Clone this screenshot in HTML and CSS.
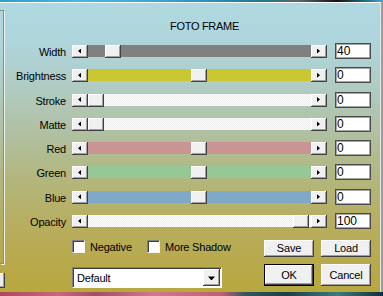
FILE: index.html
```html
<!DOCTYPE html>
<html>
<head>
<meta charset="utf-8">
<link rel="stylesheet" href="styles.css">
</head>
<body>
<div class="photo photo-top"></div>
<div class="dialog">
  <div class="side">
    <div class="group"></div>
    <div class="side-btn"></div>
  </div>
  <div class="main">
    <div class="title">FOTO FRAME</div>
    <div class="rows">
      <div class="label">Width</div>
      <div class="scroll"><div class="arrow"><i class="tri-left"></i></div><div class="track gray"><div class="thumb" style="margin-left:17px"></div></div><div class="arrow"><i class="tri-right"></i></div></div>
      <div class="edit">40</div>

      <div class="label">Brightness</div>
      <div class="scroll"><div class="arrow"><i class="tri-left"></i></div><div class="track yellow"><div class="thumb" style="margin-left:103px"></div></div><div class="arrow"><i class="tri-right"></i></div></div>
      <div class="edit">0</div>

      <div class="label">Stroke</div>
      <div class="scroll"><div class="arrow"><i class="tri-left"></i></div><div class="track dither"><div class="thumb" style="margin-left:0px"></div></div><div class="arrow"><i class="tri-right"></i></div></div>
      <div class="edit">0</div>

      <div class="label">Matte</div>
      <div class="scroll"><div class="arrow"><i class="tri-left"></i></div><div class="track dither"><div class="thumb" style="margin-left:0px"></div></div><div class="arrow"><i class="tri-right"></i></div></div>
      <div class="edit">0</div>

      <div class="label">Red</div>
      <div class="scroll"><div class="arrow"><i class="tri-left"></i></div><div class="track red"><div class="thumb" style="margin-left:103px"></div></div><div class="arrow"><i class="tri-right"></i></div></div>
      <div class="edit">0</div>

      <div class="label">Green</div>
      <div class="scroll"><div class="arrow"><i class="tri-left"></i></div><div class="track green"><div class="thumb" style="margin-left:103px"></div></div><div class="arrow"><i class="tri-right"></i></div></div>
      <div class="edit">0</div>

      <div class="label">Blue</div>
      <div class="scroll"><div class="arrow"><i class="tri-left"></i></div><div class="track blue"><div class="thumb" style="margin-left:103px"></div></div><div class="arrow"><i class="tri-right"></i></div></div>
      <div class="edit">0</div>

      <div class="label">Opacity</div>
      <div class="scroll"><div class="arrow"><i class="tri-left"></i></div><div class="track dither"><div class="thumb" style="margin-left:205px"></div></div><div class="arrow"><i class="tri-right"></i></div></div>
      <div class="edit">100</div>
    </div>
    <div class="bottom">
      <div class="opts">
        <div class="checks">
          <div class="check first"><span class="box"></span><span>Negative</span></div>
          <div class="check"><span class="box"></span><span>More Shadow</span></div>
        </div>
        <div class="combo"><span class="combo-text">Default</span><span class="drop"><i class="tri-down"></i></span></div>
      </div>
      <div class="buttons">
        <button class="btn">Save</button>
        <button class="btn">Load</button>
        <button class="btn default">OK</button>
        <button class="btn">Cancel</button>
      </div>
    </div>
  </div>
</div>
<div class="photo photo-bottom"></div>
</body>
</html>
```

FILE: styles.css
```css
* { box-sizing: border-box; }
html, body { margin: 0; padding: 0; }
body {
  width: 383px;
  height: 296px;
  overflow: hidden;
  background: #9c9c9c;
  font-family: "Liberation Sans", Arial, sans-serif;
  font-size: 11px;
  color: #000;
  letter-spacing: -0.2px;
}
.photo { width: 383px; }
.photo-top {
  height: 2px;
  background: linear-gradient(90deg, #2aa0c8 0%, #48b8e0 20%, #3ca8d0 40%, #2a90b8 55%, #207890 68%, #586870 78%, #101418 88%, #2a7090 96%, #4aa8c8 100%);
}
.photo-bottom {
  height: 4px;
  background: linear-gradient(90deg, #b04858 0%, #c86878 15%, #a05060 25%, #d07888 40%, #c06070 58%, #305860 64%, #184048 75%, #407880 88%, #103038 100%);
}
.dialog {
  width: 381px;
  height: 290px;
  border-top: 1px solid #ffffff;
  border-right: 1px solid #e6e6e6;
  display: flex;
  background: linear-gradient(to bottom, #b0d8e0 0%, #aed6dc 12%, #afd0d0 22%, #b0c8b8 34%, #b0c0a2 45%, #b3b67c 61%, #b7ad5c 78%, #b8a842 96%, #b8a840 100%);
}
.side {
  width: 6px;
  flex: none;
  display: flex;
  flex-direction: column;
}
.group {
  margin-top: 7px;
  width: 4px;
  height: 254px;
  border: 1px solid #8a8a8a;
  border-left: none;
  box-shadow: 1px 1px 0 #f0f0f0;
}
.side-btn {
  margin-top: 9px;
  width: 5px;
  height: 15px;
  background: #ececec;
  box-shadow: inset -1px -1px 0 #404040, inset -2px -2px 0 #a0a0a0, inset 0 1px 0 #fff;
}
.main {
  flex: 1;
  display: flex;
  flex-direction: column;
}
.title {
  margin-top: 16px;
  height: 14px;
  line-height: 14px;
  text-align: center;
  padding-left: 23px;
  letter-spacing: -0.3px;
}
.rows {
  margin-top: 10px;
  display: grid;
  grid-template-columns: 60px 255px 38px;
  grid-auto-rows: 24.3px;
  column-gap: 6px;
}
.label {
  text-align: right;
  margin-top: 2px;
  line-height: 14px;
  white-space: nowrap;
}
.scroll {
  margin-top: 2px;
  height: 12px;
  display: flex;
  align-items: flex-start;
}
.arrow {
  width: 16px;
  height: 13px;
  flex: none;
  background: #f0f0f0;
  box-shadow: inset -1px -1px 0 #404040, inset 1px 1px 0 #ffffff, inset -2px -2px 0 #a0a0a0;
  display: flex;
  align-items: center;
  justify-content: center;
}
.tri-left, .tri-right {
  display: block;
  width: 3px;
  height: 5px;
  background: #000;
  margin-top: -1px;
}
.tri-left { clip-path: polygon(100% 0, 0 50%, 100% 100%); margin-left: -1px; }
.tri-right { clip-path: polygon(0 0, 100% 50%, 0 100%); margin-left: -1px; }
.track {
  flex: 1;
  height: 12px;
  display: flex;
}
.track.gray { background: #808080; }
.track.yellow { background: #cac832; }
.track.red { background: #c89494; }
.track.green { background: #96c896; }
.track.blue { background: #80a8c8; }
.track.dither {
  background: repeating-conic-gradient(#ffffff 0 25%, #ebebeb 0 50%) 0 0 / 2px 2px;
}
.thumb {
  width: 16px;
  height: 13px;
  flex: none;
  background: #f0f0f0;
  box-shadow: inset -1px -1px 0 #404040, inset 1px 1px 0 #ffffff, inset -2px -2px 0 #a0a0a0;
}
.edit {
  margin-left: 2px;
  width: 36px;
  height: 16px;
  background: #fff;
  border: 1px solid #4a4a4a;
  box-shadow: inset 0 0 0 1px #a6a6a6;
  padding-left: 1px;
  font-size: 12px;
  line-height: 14px;
  letter-spacing: 0;
}
.bottom {
  margin-top: 2.6px;
  display: flex;
  align-items: flex-start;
}
.opts {
  margin-left: 66px;
  width: 150px;
  flex: none;
  display: flex;
  flex-direction: column;
}
.checks {
  display: flex;
  height: 13px;
}
.check {
  flex: none;
  display: flex;
  align-items: center;
  gap: 5px;
  line-height: 13px;
  white-space: nowrap;
}
.check span:last-child { margin-top: 2px; }
.check.first { width: 75px; }
.box {
  width: 13px;
  height: 13px;
  flex: none;
  background: #fff;
  border: 1px solid;
  border-color: #808080 #f4f4f4 #f4f4f4 #808080;
  box-shadow: inset 1px 1px 0 #404040;
}
.combo {
  margin-top: 14px;
  width: 150px;
  height: 21px;
  background: #fff;
  border: 1px solid;
  border-color: #808080 #ffffff #ffffff #808080;
  box-shadow: inset 1px 1px 0 #404040;
  display: flex;
  align-items: center;
  padding-left: 4px;
}
.combo-text { margin-top: 1px; }
.drop {
  margin-left: auto;
  margin-right: 1px;
  width: 17px;
  height: 17px;
  margin-top: 1px;
  background: #f0f0f0;
  box-shadow: inset -1px -1px 0 #404040, inset 1px 1px 0 #ffffff, inset -2px -2px 0 #a0a0a0;
  display: flex;
  align-items: center;
  justify-content: center;
}
.tri-down {
  display: block;
  width: 7px;
  height: 4px;
  background: #000;
  clip-path: polygon(0 0, 100% 0, 50% 100%);
  margin-top: 1px;
}
.buttons {
  margin-left: 42px;
  flex: none;
  display: grid;
  grid-template-columns: 50px 50px;
  grid-template-rows: 17px 22px;
  column-gap: 7px;
  row-gap: 7px;
}
.btn {
  font-family: "Liberation Sans", Arial, sans-serif;
  font-size: 11px;
  letter-spacing: -0.2px;
  color: #000;
  background: #f0f0f0;
  border: 0;
  padding: 0;
  margin: 0;
  box-shadow: inset -1px -1px 0 #404040, inset 1px 1px 0 #ffffff, inset -2px -2px 0 #a0a0a0;
}
.btn.default {
  border: 1px solid #000;
}
```
